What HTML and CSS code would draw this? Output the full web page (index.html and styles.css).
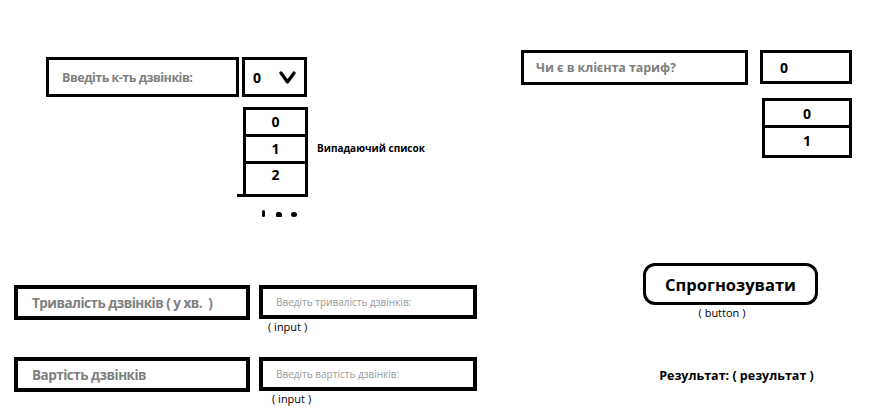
FILE: index.html
```html
<!DOCTYPE html>
<html>
	<head>
		<meta charset="UTF-8">
		<title>Прогноз дзвінків</title>
		<link rel="stylesheet" href="styles.css">
	</head>
	<body>
		<div class="page">
			<section class="top">
				<div class="calls">
					<div class="row">
						<div class="field label calls-label">Введіть к-ть дзвінків:</div>
						<div class="field select">
							<span>0</span>
							<svg class="chevron" width="17" height="13" viewBox="0 0 17 13"><polyline points="2,2 8.5,11 15,2" fill="none" stroke="#000" stroke-width="3.2" stroke-linejoin="round" stroke-linecap="round"/></svg>
						</div>
					</div>
					<div class="drop">
						<div class="drop-list">
							<ul class="list calls-list">
								<li>0</li>
								<li>1</li>
								<li>2</li>
							</ul>
							<div class="list-base"></div>
						</div>
						<span class="note">Випадаючий список</span>
					</div>
					<div class="more"><i class="dot-a"></i><i class="dot-b"></i><i class="dot-c"></i></div>
				</div>
				<div class="tariff">
					<div class="row">
						<div class="field label tariff-label">Чи є в клієнта тариф?</div>
						<div class="field value">0</div>
					</div>
					<ul class="list tariff-list">
						<li>0</li>
						<li>1</li>
					</ul>
				</div>
			</section>
			<section class="bottom">
				<div class="inputs">
					<div class="pair">
						<div class="field label big-label">Тривалість дзвінків ( у хв.&nbsp; )</div>
						<div class="input-wrap">
							<div class="field input">Введіть тривалість дзвінків:</div>
							<span class="caption">( input )</span>
						</div>
					</div>
					<div class="pair second">
						<div class="field label big-label">Вартість дзвінків</div>
						<div class="input-wrap">
							<div class="field input">Введіть вартість дзвінків:</div>
							<span class="caption">( input )</span>
						</div>
					</div>
				</div>
				<div class="actions">
					<button class="predict">Спрогнозувати</button>
					<span class="caption btn-caption">( button )</span>
					<p class="result">Результат: ( результат )</p>
				</div>
			</section>
		</div>
	</body>
</html>
```

FILE: styles.css
```css
*{
	padding: 0;
	margin: 0;
	box-sizing: border-box;
}
body{
	font-family: "Open Sans", "Liberation Sans", sans-serif;
	background: #fff;
	color: #000;
}
ul,li{
	list-style: none;
}
.page {
	width: 891px;
	height: 418px;
	overflow: hidden;
}
.top {
	display: flex;
	height: 263px;
	padding-top: 50px;
}
.row {
	display: flex;
}
.field {
	display: flex;
	align-items: center;
	border: 3px solid #000;
	background: #fff;
	white-space: nowrap;
}
.label {
	color: #808080;
	font-weight: bold;
}

/* к-ть дзвінків */
.calls {
	width: 475px;
	margin-left: 46px;
	margin-top: 7px;
}
.calls .row {
	gap: 3px;
}
.calls-label {
	width: 193px;
	height: 40px;
	padding-left: 13px;
	font-size: 12.5px;
	letter-spacing: -0.5px;
}
.select {
	width: 65px;
	height: 40px;
	padding-left: 8px;
	font-size: 14px;
	font-weight: bold;
}
.chevron {
	margin-left: 18px;
}
.drop {
	display: flex;
	margin-left: 197px;
	margin-top: 10px;
}
.list {
	border: 3px solid #000;
	font-size: 14px;
	font-weight: bold;
	text-align: center;
}
.calls-list {
	width: 65px;
	border-bottom: none;
}
.calls-list li {
	height: 27px;
	line-height: 24px;
	border-bottom: 3px solid #000;
}
.calls-list li:last-child {
	height: 30px;
	line-height: 22px;
	border-bottom: none;
}
.list-base {
	width: 71px;
	height: 3px;
	margin-left: -6px;
	background: #000;
}
.note {
	margin-left: 9px;
	margin-top: 33px;
	font-size: 10px;
	line-height: 16px;
	font-weight: bold;
}
.more {
	display: flex;
	align-items: flex-end;
	margin-left: 216px;
	margin-top: 11px;
	height: 9px;
}
.more i {
	display: block;
	background: #000;
}
.dot-a {
	width: 3px;
	height: 7px;
	border-radius: 2px;
}
.dot-b {
	width: 6px;
	height: 5px;
	margin-left: 11px;
	border-radius: 2px 3px 1px 1px;
}
.dot-c {
	width: 6px;
	height: 5px;
	margin-left: 9px;
	border-radius: 50%;
}

/* тариф */
.tariff .row {
	gap: 12px;
}
.tariff-label {
	width: 227px;
	height: 35px;
	padding-left: 12px;
	font-size: 12.5px;
	letter-spacing: -0.1px;
}
.value {
	width: 92px;
	height: 34px;
	padding-left: 17px;
	font-size: 14px;
	font-weight: bold;
}
.tariff-list {
	width: 90px;
	margin-left: 241px;
	margin-top: 13px;
}
.tariff-list li {
	height: 27px;
	line-height: 26px;
}
.tariff-list li:first-child {
	border-bottom: 3px solid #000;
}

/* нижня частина */
.bottom {
	display: flex;
	align-items: flex-start;
}
.inputs {
	width: 463px;
	margin-left: 14px;
	margin-top: 22px;
}
.pair {
	display: flex;
	gap: 9px;
}
.pair.second {
	margin-top: 22px;
}
.big-label {
	width: 236px;
	height: 35px;
	padding-left: 14px;
	border-width: 4px;
	font-size: 13.5px;
	letter-spacing: -0.5px;
}
.input-wrap {
	display: flex;
	flex-direction: column;
}
.input {
	width: 218px;
	height: 34px;
	padding-left: 13px;
	border-width: 4px;
	color: #9a9a9a;
	font-size: 10px;
}
.caption {
	margin-left: 9px;
	font-size: 11px;
	line-height: 16px;
}
.second .caption {
	margin-left: 13px;
}
.actions {
	display: flex;
	flex-direction: column;
	align-items: center;
	width: 175px;
	margin-left: 166px;
}
.predict {
	width: 175px;
	height: 42px;
	border: 3px solid #000;
	border-radius: 12px;
	background: #fff;
	font-family: inherit;
	font-size: 16.5px;
	font-weight: bold;
	color: #000;
}
.btn-caption {
	margin-left: 0;
	margin-right: 17px;
}
.result {
	margin-top: 46px;
	margin-left: 12px;
	font-size: 12.5px;
	line-height: 18px;
	font-weight: bold;
}
```
